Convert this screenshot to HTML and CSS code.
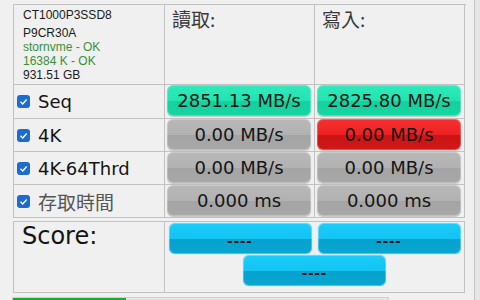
FILE: index.html
```html
<!DOCTYPE html>
<html lang="zh-Hant">
<head>
    <meta charset="UTF-8">
    <meta name="viewport" content="width=device-width, initial-scale=1.0">
    <title>AS SSD Benchmark</title>
    <link rel="stylesheet" href="styles.css">
</head>
<body>
    <div class="window">
        <div class="main">
            <div class="grid">
                <div class="cell info">
                    <div class="model">CT1000P3SSD8</div>
                    <div>P9CR30A</div>
                    <div class="ok">stornvme - OK</div>
                    <div class="ok">16384 K - OK</div>
                    <div>931.51 GB</div>
                </div>
                <div class="cell head">讀取:</div>
                <div class="cell head">寫入:</div>

                <div class="cell label"><span class="check"><svg width="13" height="13" viewBox="0 0 13 13"><path d="M3.5 6.8l2.2 2.1 4-4.3" fill="none" stroke="#fff" stroke-width="1.4"/></svg></span>Seq</div>
                <div class="cell value"><div class="box green">2851.13 MB/s</div></div>
                <div class="cell value"><div class="box green">2825.80 MB/s</div></div>

                <div class="cell label"><span class="check"><svg width="13" height="13" viewBox="0 0 13 13"><path d="M3.5 6.8l2.2 2.1 4-4.3" fill="none" stroke="#fff" stroke-width="1.4"/></svg></span>4K</div>
                <div class="cell value"><div class="box gray">0.00 MB/s</div></div>
                <div class="cell value"><div class="box red">0.00 MB/s</div></div>

                <div class="cell label"><span class="check"><svg width="13" height="13" viewBox="0 0 13 13"><path d="M3.5 6.8l2.2 2.1 4-4.3" fill="none" stroke="#fff" stroke-width="1.4"/></svg></span>4K-64Thrd</div>
                <div class="cell value"><div class="box gray">0.00 MB/s</div></div>
                <div class="cell value"><div class="box gray">0.00 MB/s</div></div>

                <div class="cell label"><span class="check"><svg width="13" height="13" viewBox="0 0 13 13"><path d="M3.5 6.8l2.2 2.1 4-4.3" fill="none" stroke="#fff" stroke-width="1.4"/></svg></span><span class="cjk">存取時間</span></div>
                <div class="cell value"><div class="box gray">0.000 ms</div></div>
                <div class="cell value"><div class="box gray">0.000 ms</div></div>
            </div>

            <div class="score">
                <div class="score-label">Score:</div>
                <div class="score-buttons">
                    <div class="pill">----</div>
                    <div class="pill">----</div>
                    <div class="pill">----</div>
                </div>
            </div>

            <div class="progress"><div class="progress-fill" style="width: 30%"></div></div>
        </div>
        <div class="edge"></div>
    </div>
</body>
</html>
```

FILE: styles.css
```css
html, body {
    margin: 0;
    padding: 0;
    height: 100%;
    overflow: hidden;
}
body {
    background-color: #f0f0f0;
    font-family: "DejaVu Sans", sans-serif;
    color: #141414;
}
.window {
    display: flex;
    height: 300px;
}
.main {
    width: 474px;
    padding-left: 13px;
    padding-top: 4px;
    box-sizing: border-box;
}
.edge {
    flex: 1;
    background-color: #e6e6e6;
    border-left: 1px solid #c6c6c6;
}

/* results table */
.grid {
    display: grid;
    grid-template-columns: 151px 150px 150px;
    grid-template-rows: 80px 34px 33px 33px 33px;
    width: 452px;
    border-top: 1px solid #c2c2c2;
    border-left: 1px solid #c2c2c2;
}
.cell {
    border-right: 1px solid #c2c2c2;
    border-bottom: 1px solid #c2c2c2;
    box-sizing: border-box;
}
.info {
    padding: 3px 0 0 9px;
    font-family: "Liberation Sans", Arial, sans-serif;
    font-size: 12px;
    line-height: 14px;
    color: #1a1a1a;
}
.info .model {
    margin-bottom: 4px;
}
.info .ok {
    color: #3a8f3a;
}
.head {
    padding: 1px 0 0 7px;
    font-family: "Noto Sans CJK TC", sans-serif;
    font-size: 19px;
    line-height: 26px;
    color: #3a3a3a;
}
.label {
    display: flex;
    align-items: center;
    padding-left: 3px;
    font-size: 18px;
}
.check {
    display: inline-flex;
    width: 13px;
    height: 13px;
    margin-right: 8px;
    background-color: #1b6bd0;
    border-radius: 3px;
}
.cjk {
    font-family: "Noto Sans CJK TC", sans-serif;
    font-size: 19px;
    color: #555;
}
.value {
    padding: 0 3px 1px 2px;
}
.box {
    height: 31px;
    border-radius: 6px;
    display: flex;
    align-items: center;
    justify-content: center;
    font-size: 18px;
    color: #151515;
    box-shadow: inset 0 0 0 1px rgba(255, 255, 255, 0.25), 0 1px 1px rgba(0, 0, 0, 0.18);
}
.green {
    background: linear-gradient(to bottom, #30eabb 0%, #22e4b0 50%, #14d19e 50%, #16d6a2 100%);
}
.gray {
    background: linear-gradient(to bottom, #b8b8b8 0%, #b2b2b2 50%, #a4a4a4 50%, #a8a8a8 100%);
}
.red {
    background: linear-gradient(to bottom, #f43030 0%, #ee2222 50%, #cc1414 50%, #d01818 100%);
}

/* score panel */
.score {
    display: flex;
    width: 452px;
    height: 72px;
    margin-top: 3px;
    border: 1px solid #c2c2c2;
    box-sizing: border-box;
}
.score-label {
    width: 151px;
    border-right: 1px solid #c2c2c2;
    box-sizing: border-box;
    padding: 0 0 0 8px;
    font-size: 24px;
    line-height: 28px;
}
.score-buttons {
    flex: 1;
    display: flex;
    flex-wrap: wrap;
    justify-content: center;
    align-content: flex-start;
    column-gap: 6px;
    row-gap: 1px;
    padding-top: 1px;
}
.pill {
    width: 143px;
    height: 31px;
    border-radius: 6px;
    display: flex;
    align-items: center;
    justify-content: center;
    padding-top: 4px;
    box-sizing: border-box;
    font-family: "Liberation Sans", Arial, sans-serif;
    font-size: 16px;
    font-weight: bold;
    letter-spacing: 1px;
    color: #111;
    background: linear-gradient(to bottom, #1ccbf8 0%, #12c4f4 50%, #06a2ce 50%, #08a6d2 100%);
    box-shadow: inset 0 0 0 1px rgba(255, 255, 255, 0.3), 0 0 1px rgba(60, 200, 250, 0.8);
}

/* progress */
.progress {
    width: 375px;
    height: 8px;
    margin: 4px 0 0 -1px;
    border: 1px solid #cfcfcf;
    background-color: #e6e6e6;
}
.progress-fill {
    height: 100%;
    background-color: #0fb02a;
}
```
